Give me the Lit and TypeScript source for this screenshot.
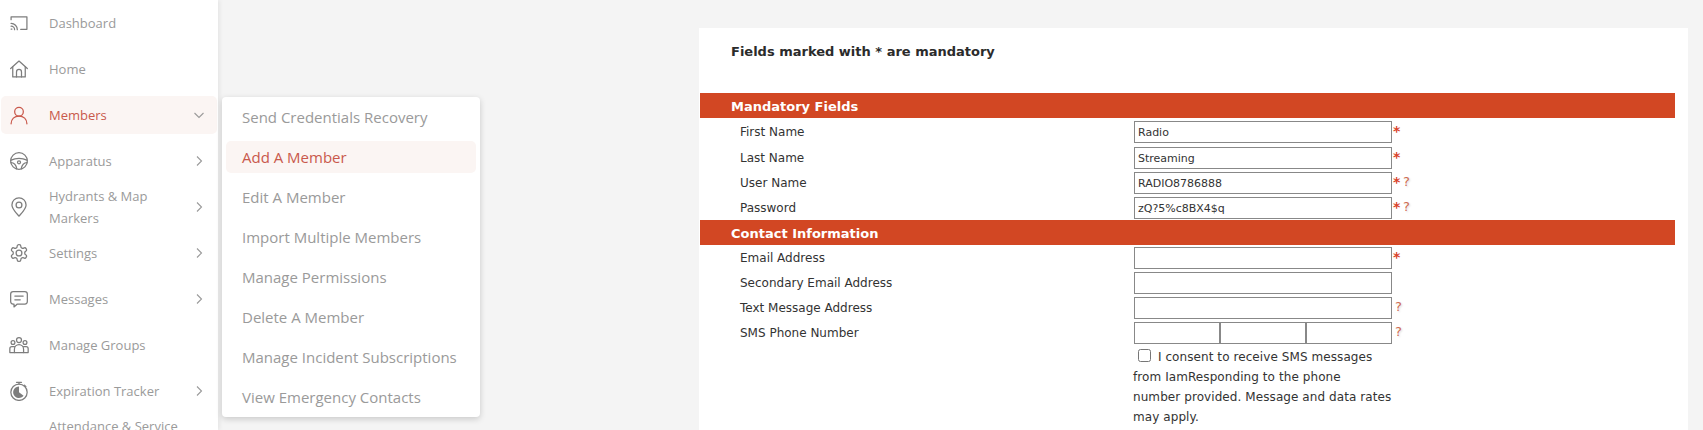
import { LitElement, html, css, svg } from "lit";
import { customElement } from "lit/decorators.js";

const icons: Record<string, unknown> = {
  cast: svg`<path d="M2.5 8V4.500h19v15h-7.500"/><path d="M2.500 12.500a7.500 7.500 0 0 1 7.500 7.500"/><path d="M2.500 15.800a4.200 4.200 0 0 1 4.200 4.200"/><path d="M2.500 19.200h1"/>`,
  home: svg`<path d="M2 11.500 12 2.500l10 9"/><path d="M4.500 9.500V21.500h15V9.500"/><path d="M9 21.500v-6a3 3 0 0 1 6 0v6"/>`,
  user: svg`<circle cx="12" cy="8" r="5.200"/><path d="M2.500 22.500c0-5.500 4-9.300 9.500-9.300s9.500 3.800 9.500 9.300"/>`,
  wheel: svg`<circle cx="12" cy="12" r="10"/><path d="M2.500 11c3-1.500 6-2.200 9.500-2.200s6.500.7 9.500 2.200"/><path d="M2.300 14c3.500 0 6.200 2.500 7 7.500"/><path d="M21.700 14c-3.500 0-6.200 2.500-7 7.500"/><circle cx="12" cy="13.500" r="1.800"/>`,
  pin: svg`<path d="M12 23c-4-4.500-8.500-9-8.500-13.500a8.500 8.500 0 0 1 17 0C20.500 14 16 18.500 12 23Z"/><circle cx="12" cy="9.500" r="3.500"/>`,
  gear: svg`<path d="M12.220 2h-.44a2 2 0 0 0-2 2v.18a2 2 0 0 1-1 1.730l-.43.250a2 2 0 0 1-2 0l-.15-.080a2 2 0 0 0-2.730.730l-.22.380a2 2 0 0 0 .730 2.730l.15.100a2 2 0 0 1 1 1.720v.510a2 2 0 0 1-1 1.740l-.15.090a2 2 0 0 0-.730 2.730l.22.380a2 2 0 0 0 2.730.730l.15-.080a2 2 0 0 1 2 0l.43.250a2 2 0 0 1 1 1.730V20a2 2 0 0 0 2 2h.44a2 2 0 0 0 2-2v-.18a2 2 0 0 1 1-1.730l.43-.250a2 2 0 0 1 2 0l.15.080a2 2 0 0 0 2.730-.730l.22-.390a2 2 0 0 0-.730-2.730l-.15-.080a2 2 0 0 1-1-1.740v-.5a2 2 0 0 1 1-1.740l.15-.090a2 2 0 0 0 .730-2.730l-.22-.380a2 2 0 0 0-2.730-.730l-.15.080a2 2 0 0 1-2 0l-.43-.250a2 2 0 0 1-1-1.730V4a2 2 0 0 0-2-2z"/><circle cx="12" cy="12" r="3.500"/>`,
  msg: svg`<path d="M5 3h14a3 3 0 0 1 3 3v9a3 3 0 0 1-3 3h-9l-4 3.500V18H5a3 3 0 0 1-3-3V6a3 3 0 0 1 3-3Z"/><path d="M7 8.500h10M7 13h6.500"/>`,
  group: svg`<circle cx="12" cy="6" r="3"/><circle cx="4.800" cy="9" r="2.300"/><circle cx="19.200" cy="9" r="2.300"/><path d="M6.500 21v-4a5.500 5.500 0 0 1 11 0v4"/><path d="M6.500 14H3.500A2.500 2.500 0 0 0 1 16.500V21h22v-4.500a2.500 2.500 0 0 0-2.500-2.500h-3"/>`,
  timer: svg`<circle cx="12" cy="13.500" r="9.800"/><path d="M9 1.500h6M12 1.500v2.200M18.500 5l1.800 1.800"/><path class="fill" d="M12 6.500a7 7 0 1 0 5.500 11.300L12 13.500Z"/>`,
};

const side = [
  { icon: "cast", label: "Dashboard" },
  { icon: "home", label: "Home" },
  { icon: "user", label: "Members", open: true, active: true },
  { icon: "wheel", label: "Apparatus", more: true },
  { icon: "pin", label: "Hydrants & Map Markers", more: true },
  { icon: "gear", label: "Settings", more: true },
  { icon: "msg", label: "Messages", more: true },
  { icon: "group", label: "Manage Groups" },
  { icon: "timer", label: "Expiration Tracker", more: true },
  { icon: "", label: "Attendance & Service Tracking", more: true },
];

const sub = [
  "Send Credentials Recovery",
  "Add A Member",
  "Edit A Member",
  "Import Multiple Members",
  "Manage Permissions",
  "Delete A Member",
  "Manage Incident Subscriptions",
  "View Emergency Contacts",
];

const mandatory = [
  { label: "First Name", value: "Radio", req: true, help: false, cls: "first" },
  { label: "Last Name", value: "Streaming", req: true, help: false, cls: "" },
  { label: "User Name", value: "RADIO8786888", req: true, help: true, cls: "" },
  { label: "Password", value: "zQ?5%c8BX4$q", req: true, help: true, cls: "" },
];
const contact = [
  { label: "Email Address", value: "", req: true, help: false, cls: "" },
  { label: "Secondary Email Address", value: "", req: false, help: false, cls: "" },
  { label: "Text Message Address", value: "", req: false, help: true, cls: "" },
];

@customElement("app-root")
export class AppRoot extends LitElement {
  static styles = css`
    :host { display: block; height: 430px; overflow: hidden; background: #f4f4f4; position: relative; }
    * { box-sizing: border-box; }
    .page { display: grid; grid-template-columns: 218px 1fr; height: 430px; overflow: hidden; }
    .side { background: #fff; box-shadow: 2px 0 4px rgba(0,0,0,.06); font: 13px/22px "Open Sans", sans-serif; color: #9a9a9a; height: 430px; overflow: hidden; position: relative; z-index: 1; display: flex; flex-direction: column; gap: 8px; padding: 4px 1px 0; }
    .item { flex: 0 0 38px; height: 38px; border-radius: 5px; display: grid; grid-template-columns: 40px 132px 1fr; grid-template-rows: 38px; align-items: center; padding-left: 8px; }
    .item.active { background: #fbf5f3; color: #c9594c; }
    .ico { width: 20px; height: 20px; fill: none; stroke: #7d7d7d; stroke-width: 1.500; stroke-linecap: round; stroke-linejoin: round; }
    .active .ico { stroke: #c9594c; }
    .ico .fill { fill: #7d7d7d; stroke: none; }
    .chev { width: 10px; height: 10px; margin-left: 13px; fill: none; stroke: #9a9a9a; stroke-width: 1.100; }
    .main { padding: 28px 15px 0 481px; }
    .card { background: #fff; height: 402px; padding-left: 1px; padding-right: 13px; font: 12px/20px "DejaVu Sans", Verdana, sans-serif; color: #333; }
    .head { height: 65px; padding: 14px 0 0 31px; font-weight: 700; font-size: 13px; color: #2b2b2b; }
    .bar { height: 25px; background: #d24723; color: #fff; font-weight: 700; font-size: 13px; line-height: 25px; padding: 1px 0 0 31px; }
    .bar.next { margin-top: 1px; }
    .rows { display: flex; flex-direction: column; gap: 3px; padding-top: 3px; }
    .rows.tight { padding-top: 2px; }
    .row { display: grid; grid-template-columns: 394px 258px 1fr; padding-left: 40px; height: 22px; }
    .row.first { margin-bottom: 1px; }
    .label { line-height: 23px; }
    input.txt { width: 100%; height: 22px; border: 1px solid #888; background: #fff; padding: 0 3px; margin: 0; font: 11px "DejaVu Sans", Verdana, sans-serif; color: #333; border-radius: 0; outline: none; display: block; }
    .phone { display: grid; grid-template-columns: repeat(3, 1fr); }
    .marks { display: flex; align-items: flex-start; padding-left: 1px; line-height: 20px; }
    .req { color: #d9432a; font-weight: 700; width: 8px; font-size: 14px; }
    .q { color: #cf6a50; font-size: 13px; padding-left: 2px; text-shadow: 1px 1px 2px rgba(0,0,0,.15); }
    .consent { margin: 3px 0 0 433px; width: 258px; line-height: 20px; font-size: 12px; letter-spacing: .08px; white-space: nowrap; }
    .consent input { margin: 0 3px 0 5px; width: 13px; height: 13px; vertical-align: -1px; }
    .menu { position: absolute; left: 222px; top: 97px; width: 258px; height: 320px; background: #fff; border-radius: 4px; box-shadow: 0 2px 6px rgba(0,0,0,.18); padding: 4px 4px 0; z-index: 2; font: 15px/32px "Open Sans", sans-serif; color: #9a9a9a; display: flex; flex-direction: column; gap: 8px; }
    .menu div { height: 32px; flex: 0 0 32px; padding-left: 16px; border-radius: 5px; white-space: nowrap; }
    .menu .on { background: #fbf5f3; color: #c9594c; }
  `;

  private chev(open?: boolean) {
    return html`<svg class="chev" viewBox="0 0 10 10">${open ? svg`<path d="M.5 3 5 7.500 9.500 3"/>` : svg`<path d="M3 .5 7.500 5 3 9.500"/>`}</svg>`;
  }

  private marks(req: boolean, help: boolean) {
    return html`<div class="marks">${req ? html`<span class="req">*</span>` : ""}${help ? html`<span class="q">?</span>` : ""}</div>`;
  }

  private row(r: { label: string; value: string; req: boolean; help: boolean; cls: string }) {
    return html`<div class="row ${r.cls}"><div class="label">${r.label}</div><input class="txt" .value=${r.value} />${this.marks(r.req, r.help)}</div>`;
  }

  render() {
    return html`
      <div class="page">
        <nav class="side">
          ${side.map(s => html`<div class="item ${s.active ? "active" : ""}">
            ${s.icon ? html`<svg class="ico" viewBox="0 0 24 24">${icons[s.icon]}</svg>` : html`<span></span>`}
            <span>${s.label}</span>
            ${s.more || s.open ? this.chev(s.open) : ""}
          </div>`)}
        </nav>
        <main class="main">
          <section class="card">
            <div class="head">Fields marked with * are mandatory</div>
            <div class="bar">Mandatory Fields</div>
            <div class="rows">${mandatory.map(r => this.row(r))}</div>
            <div class="bar next">Contact Information</div>
            <div class="rows tight">
              ${contact.map(r => this.row(r))}
              <div class="row">
                <div class="label">SMS Phone Number</div>
                <div class="phone"><input class="txt" /><input class="txt" /><input class="txt" /></div>
                ${this.marks(false, true)}
              </div>
            </div>
            <div class="consent"><input type="checkbox" /> I consent to receive SMS messages<br />from IamResponding to the phone<br />number provided. Message and data rates<br />may apply.</div>
          </section>
        </main>
      </div>
      <div class="menu">
        ${sub.map((s, i) => html`<div class=${i === 1 ? "on" : ""}>${s}</div>`)}
      </div>
    `;
  }
}
